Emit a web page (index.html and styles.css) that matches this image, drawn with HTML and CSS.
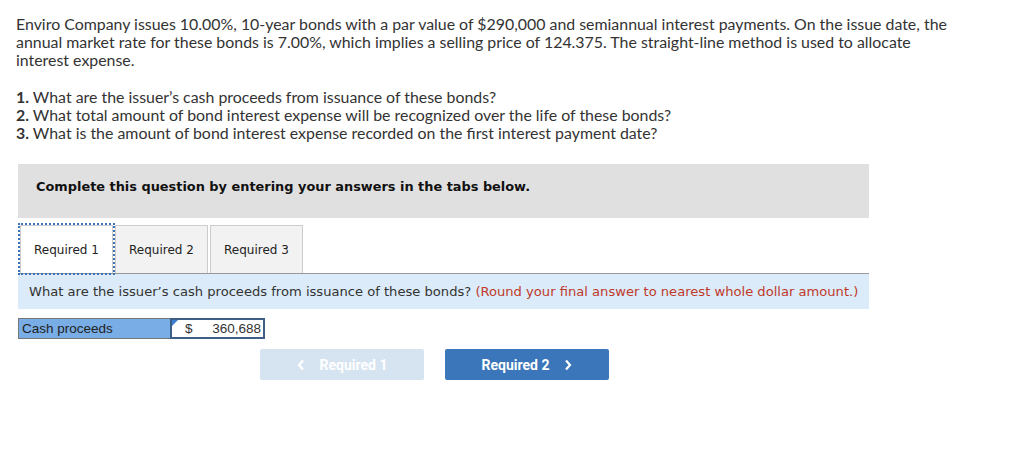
FILE: index.html
```html
<!DOCTYPE html>
<html>
<head>
<meta charset="utf-8">
<link rel="stylesheet" href="styles.css">
</head>
<body>
<div class="page">
  <p class="intro">Enviro Company issues 10.00%, 10-year bonds with a par value of $290,000 and semiannual interest payments. On the issue date, the annual market rate for these bonds is 7.00%, which implies a selling price of 124.375. The straight-line method is used to allocate interest expense.</p>
  <ol class="questions">
    <li><b>1.</b> What are the issuer’s cash proceeds from issuance of these bonds?</li>
    <li><b>2.</b> What total amount of bond interest expense will be recognized over the life of these bonds?</li>
    <li><b>3.</b> What is the amount of bond interest expense recorded on the first interest payment date?</li>
  </ol>
  <div class="panel">
    <div class="banner">Complete this question by entering your answers in the tabs below.</div>
    <div class="tabs">
      <div class="tab active">Required 1</div>
      <div class="tab">Required 2</div>
      <div class="tab">Required 3</div>
    </div>
    <div class="prompt">What are the issuer’s cash proceeds from issuance of these bonds? <span class="hint">(Round your final answer to nearest whole dollar amount.)</span></div>
    <div class="answer-row">
      <div class="label">Cash proceeds</div>
      <div class="input"><span class="corner"></span><span class="dollar">$</span><span class="value">360,688</span></div>
    </div>
    <div class="nav">
      <div class="btn prev"><svg class="chev" width="8" height="12" viewBox="0 0 8 12"><polyline points="6,1.5 2,6 6,10.5" fill="none" stroke="#fff" stroke-width="2.2"/></svg><span>Required 1</span></div>
      <div class="btn next"><span>Required 2</span><svg class="chev" width="8" height="12" viewBox="0 0 8 12"><polyline points="2,1.5 6,6 2,10.5" fill="none" stroke="#fff" stroke-width="2.2"/></svg></div>
    </div>
  </div>
</div>
</body>
</html>
```
FILE: styles.css
```css
html, body { margin: 0; padding: 0; background: #fff; }
.page { padding: 15px 0 0 16px; }
.intro {
  margin: 0;
  width: 945px;
  font-family: Lato, "Open Sans", sans-serif;
  font-size: 15.9px;
  line-height: 18px;
  color: #333;
}
.questions {
  list-style: none;
  margin: 19px 0 0 0;
  padding: 0;
  font-family: Lato, "Open Sans", sans-serif;
  font-size: 15.9px;
  line-height: 18px;
  color: #333;
}
.questions b { font-weight: 700; }
.panel { margin: 22px 0 0 2px; width: 851px; }
.banner {
  background: #e0e0e0;
  height: 54px;
  box-sizing: border-box;
  padding: 15px 0 0 18px;
  font-family: "DejaVu Sans", Verdana, sans-serif;
  font-weight: bold;
  font-size: 12.9px;
  color: #111;
}
.tabs {
  display: flex;
  gap: 2px;
  margin-top: 7px;
  border-bottom: 1px solid #999;
  padding-left: 2px;
}
.tab {
  height: 48px;
  box-sizing: border-box;
  width: 93px;
  border: 1px solid #ccc;
  border-bottom: none;
  background: #f2f2f2;
  font-family: "DejaVu Sans", Verdana, sans-serif;
  font-size: 12px;
  color: #222;
  display: flex;
  align-items: center;
  justify-content: center;
}
.tab.active {
  background: #fff;
  outline: 2px dotted #3b73b9;
  outline-offset: 0;
}
.prompt {
  background: #dbebf9;
  height: 35px;
  box-sizing: border-box;
  padding: 10px 0 0 11px;
  font-family: "DejaVu Sans", Verdana, sans-serif;
  font-size: 13.1px;
  color: #333;
}
.hint { color: #c0392b; }
.answer-row {
  display: flex;
  margin-top: 9px;
  height: 21px;
  font-family: "Liberation Sans", Arial, sans-serif;
  font-size: 13.5px;
}
.label {
  width: 152px;
  box-sizing: border-box;
  background: #78ade6;
  border: 1px solid #777;
  border-right: none;
  padding: 2px 0 0 3px;
  color: #222;
}
.input {
  position: relative;
  width: 95px;
  box-sizing: border-box;
  border: 2px solid #3d5f86;
  background: #fff;
  display: flex;
  justify-content: space-between;
  padding: 1px 2px 0 13px;
  color: #333;
}
.corner {
  position: absolute;
  left: 0; top: 0;
  width: 0; height: 0;
  border-top: 6px solid #3a7fd0;
  border-right: 6px solid transparent;
}
.nav {
  display: flex;
  gap: 21px;
  margin: 10px 0 0 242px;
}
.btn {
  width: 164px;
  height: 31px;
  border-radius: 2px;
  display: flex;
  align-items: center;
  justify-content: center;
  font-family: Roboto, sans-serif;
  font-weight: bold;
  font-size: 14px;
  color: #fff;
  gap: 15px;
}
.btn.next { background: #3a76b9; }
.btn.prev { background: #d6e3f1; }
```
